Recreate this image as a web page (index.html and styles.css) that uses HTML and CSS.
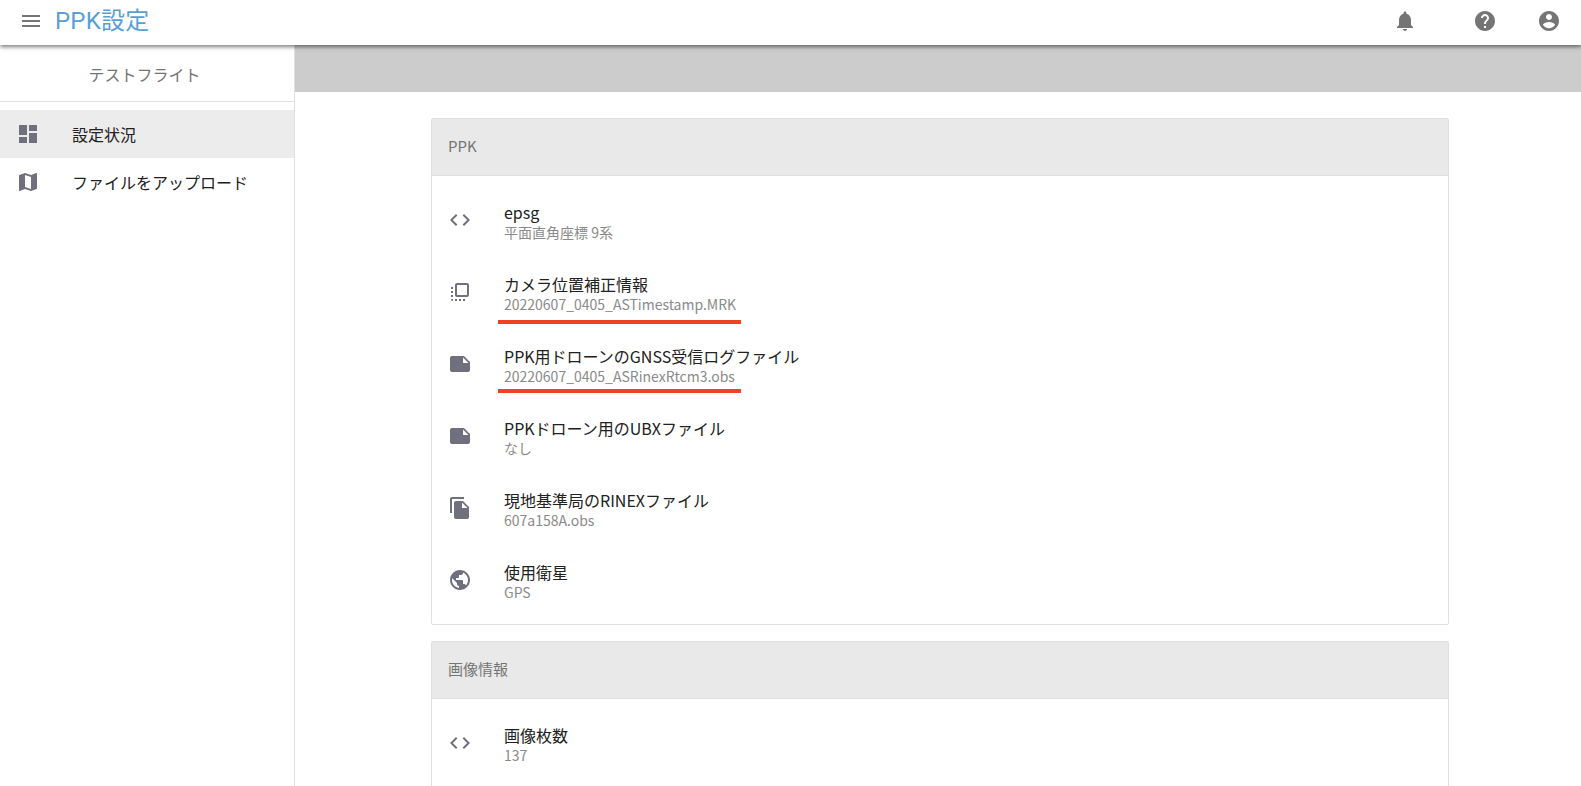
FILE: index.html
```html
<!DOCTYPE html>
<html lang="ja">
<head>
<meta charset="utf-8">
<title>PPK設定</title>
<link rel="stylesheet" href="styles.css">
</head>
<body>
<div class="app">
  <header class="topbar">
    <svg class="icon menu-icon" viewBox="0 0 24 24"><path d="M3 18h18v-2H3v2zm0-5h18v-2H3v2zm0-7v2h18V6H3z"/></svg>
    <h1 class="app-title">PPK設定</h1>
    <div class="top-actions">
      <svg class="icon top-icon bell" viewBox="0 0 24 24"><path d="M12 22c1.1 0 2-.9 2-2h-4c0 1.1.89 2 2 2zm6-6v-5c0-3.07-1.64-5.64-4.5-6.32V4c0-.83-.67-1.5-1.5-1.5s-1.5.67-1.5 1.5v.68C7.63 5.36 6 7.92 6 11v5l-2 2v1h16v-1l-2-2z"/></svg>
      <svg class="icon top-icon help" viewBox="0 0 24 24"><path d="M12 2C6.48 2 2 6.48 2 12s4.48 10 10 10 10-4.48 10-10S17.52 2 12 2zm1 17h-2v-2h2v2zm2.07-7.75l-.9.92C13.45 12.9 13 13.5 13 15h-2v-.5c0-1.1.45-2.1 1.17-2.83l1.24-1.26c.37-.36.59-.86.59-1.41 0-1.1-.9-2-2-2s-2 .9-2 2H8c0-2.21 1.79-4 4-4s4 1.79 4 4c0 .88-.36 1.68-.93 2.25z"/></svg>
      <svg class="icon top-icon" viewBox="0 0 24 24"><path d="M12 2C6.48 2 2 6.48 2 12s4.48 10 10 10 10-4.48 10-10S17.52 2 12 2zm0 3c1.66 0 3 1.34 3 3s-1.34 3-3 3-3-1.34-3-3 1.34-3 3-3zm0 14.2c-2.5 0-4.71-1.28-6-3.22.03-1.99 4-3.08 6-3.08 1.99 0 5.97 1.09 6 3.08-1.29 1.94-3.5 3.22-6 3.22z"/></svg>
    </div>
  </header>
  <div class="body-row">
    <aside class="sidebar">
      <div class="side-title">テストフライト</div>
      <nav class="side-nav">
        <a class="nav-item active">
          <svg class="icon item-icon" viewBox="0 0 24 24"><path d="M3 13h8V3H3v10zm0 8h8v-6H3v6zm10 0h8V11h-8v10zm0-18v6h8V3h-8z"/></svg>
          <span>設定状況</span>
        </a>
        <a class="nav-item">
          <svg class="icon item-icon" viewBox="0 0 24 24"><path d="M20.5 3l-.16.03L15 5.1 9 3 3.36 4.9c-.21.07-.36.25-.36.48V20.5c0 .28.22.5.5.5l.16-.03L9 18.9l6 2.1 5.64-1.9c.21-.07.36-.25.36-.48V3.5c0-.28-.22-.5-.5-.5zM15 19l-6-2.11V5l6 2.11V19z"/></svg>
          <span>ファイルをアップロード</span>
        </a>
      </nav>
    </aside>
    <main class="main">
      <div class="band"></div>
      <div class="content">
        <section class="card">
          <div class="card-head">PPK</div>
          <ul class="list">
            <li class="row">
              <svg class="icon item-icon" viewBox="0 0 24 24"><path d="M9.4 16.6L4.8 12l4.6-4.6L8 6l-6 6 6 6 1.4-1.4zm5.2 0l4.6-4.6-4.6-4.6L16 6l6 6-6 6-1.4-1.4z"/></svg>
              <div class="row-text"><div class="row-title">epsg</div><div class="row-sub">平面直角座標 9系</div></div>
            </li>
            <li class="row">
              <svg class="icon item-icon" viewBox="0 0 24 24"><path d="M3 13h2v-2H3v2zm0 4h2v-2H3v2zm2 4v-2H3c0 1.1.89 2 2 2zM3 9h2V7H3v2zm12 12h2v-2h-2v2zm4-18H9c-1.11 0-2 .9-2 2v10c0 1.1.89 2 2 2h10c1.1 0 2-.9 2-2V5c0-1.1-.9-2-2-2zm0 12H9V5h10v10zm-8 6h2v-2h-2v2zm-4 0h2v-2H7v2z"/></svg>
              <div class="row-text"><div class="row-title">カメラ位置補正情報</div><div class="row-sub">20220607_0405_ASTimestamp.MRK</div></div>
              <span class="mark mark-a"></span>
            </li>
            <li class="row">
              <svg class="icon item-icon" viewBox="0 0 24 24"><path d="M22 10l-6-6H4c-1.1 0-2 .9-2 2v12.01c0 1.1.9 1.99 2 1.99l16-.01c1.1 0 2-.89 2-1.99v-8zm-7-4.5l5.5 5.5H15V5.5z"/></svg>
              <div class="row-text"><div class="row-title">PPK用ドローンのGNSS受信ログファイル</div><div class="row-sub">20220607_0405_ASRinexRtcm3.obs</div></div>
              <span class="mark mark-b"></span>
            </li>
            <li class="row">
              <svg class="icon item-icon" viewBox="0 0 24 24"><path d="M22 10l-6-6H4c-1.1 0-2 .9-2 2v12.01c0 1.1.9 1.99 2 1.99l16-.01c1.1 0 2-.89 2-1.99v-8zm-7-4.5l5.5 5.5H15V5.5z"/></svg>
              <div class="row-text"><div class="row-title">PPKドローン用のUBXファイル</div><div class="row-sub">なし</div></div>
            </li>
            <li class="row">
              <svg class="icon item-icon" viewBox="0 0 24 24"><path d="M16 1H4c-1.1 0-2 .9-2 2v14h2V3h12V1zm-1 4l6 6v10c0 1.1-.9 2-2 2H7.99C6.89 23 6 22.1 6 21l.01-14c0-1.1.89-2 1.99-2h7zm-1 7h5.5L14 6.5V12z"/></svg>
              <div class="row-text"><div class="row-title">現地基準局のRINEXファイル</div><div class="row-sub">607a158A.obs</div></div>
            </li>
            <li class="row">
              <svg class="icon item-icon" viewBox="0 0 24 24"><path d="M12 2C6.48 2 2 6.48 2 12s4.48 10 10 10 10-4.48 10-10S17.52 2 12 2zm-1 17.93c-3.95-.49-7-3.85-7-7.93 0-.62.08-1.21.21-1.79L9 15v1c0 1.1.9 2 2 2v1.93zm6.9-2.54c-.26-.81-1-1.39-1.9-1.39h-1v-3c0-.55-.45-1-1-1H8v-2h2c.55 0 1-.45 1-1V7h2c1.1 0 2-.9 2-2v-.41c2.93 1.19 5 4.06 5 7.41 0 2.08-.8 3.97-2.1 5.39z"/></svg>
              <div class="row-text"><div class="row-title">使用衛星</div><div class="row-sub">GPS</div></div>
            </li>
          </ul>
        </section>
        <section class="card">
          <div class="card-head">画像情報</div>
          <ul class="list">
            <li class="row">
              <svg class="icon item-icon" viewBox="0 0 24 24"><path d="M9.4 16.6L4.8 12l4.6-4.6L8 6l-6 6 6 6 1.4-1.4zm5.2 0l4.6-4.6-4.6-4.6L16 6l6 6-6 6-1.4-1.4z"/></svg>
              <div class="row-text"><div class="row-title">画像枚数</div><div class="row-sub">137</div></div>
            </li>
            <li class="row"></li>
          </ul>
        </section>
      </div>
    </main>
  </div>
</div>
</body>
</html>
```

FILE: styles.css
```css
* { box-sizing: border-box; }
html, body { margin: 0; height: 100%; overflow: hidden; background: #fff; }
body { font-family: "Noto Sans CJK JP", "Noto Sans", sans-serif; color: #212121; }
.app { height: 786px; display: flex; flex-direction: column; overflow: hidden; }
.icon { width: 24px; height: 24px; fill: #6f6f7d; flex: none; display: block; }

.topbar {
  height: 45px; flex: none; display: flex; align-items: center;
  padding: 0 20px 3px 19px; background: #fff;
  box-shadow: 0 2px 4px rgba(0,0,0,.5); position: relative; z-index: 2;
}
.menu-icon { fill: #757575; }
.app-title {
  margin: 0 0 0 12px; font-family: Roboto, "Noto Sans CJK JP", sans-serif;
  font-size: 24px; font-weight: 400; line-height: 32px; letter-spacing: .2px; color: #5a9fd4;
}
.top-actions { margin-left: auto; display: flex; gap: 40px; }
.top-icon { fill: #757575; }
.bell { margin-right: 16px; }

.body-row { flex: 1; display: flex; min-height: 0; }
.sidebar { width: 295px; flex: none; border-right: 1px solid #e0e0e0; }
.side-title {
  height: 57px; display: flex; align-items: center; justify-content: center;
  font-size: 16px; color: #757575; border-bottom: 1px solid #e0e0e0; padding: 2px 5px 0 0;
}
.side-nav { padding-top: 8px; }
.nav-item { height: 48px; display: flex; align-items: center; padding-left: 16px; font-size: 16px; color: #212121; }
.nav-item.active { background: #ececec; }
.nav-item .item-icon { margin-right: 32px; }

.main { flex: 1; min-width: 0; }
.band { height: 47px; background: #cccccc; }
.content { padding: 26px 132px 0 136px; display: flex; flex-direction: column; gap: 16px; }
.card { border: 1px solid #e0e0e0; border-radius: 2px; }
.card-head {
  height: 57px; display: flex; align-items: center; padding: 0 16px 3px;
  background: #e9e9e9; border-bottom: 1px solid #e0e0e0;
  font-size: 15px; color: #757575;
}
.list { list-style: none; margin: 0; padding: 8px 0; }
.row { height: 72px; display: flex; align-items: center; padding: 0 16px; position: relative; }
.row .item-icon { margin-right: 32px; }
.row-text { min-width: 0; margin-top: 3px; }
.row-title { font-size: 16px; line-height: 20px; color: #212121; }
.row-sub { font-size: 14px; line-height: 18px; margin-top: 1px; color: #8a8a8a; }
.mark { position: absolute; left: 66px; width: 243px; height: 4px; background: #ee4323; }
.mark-a { top: 64px; }
.mark-b { top: 61px; }
```
